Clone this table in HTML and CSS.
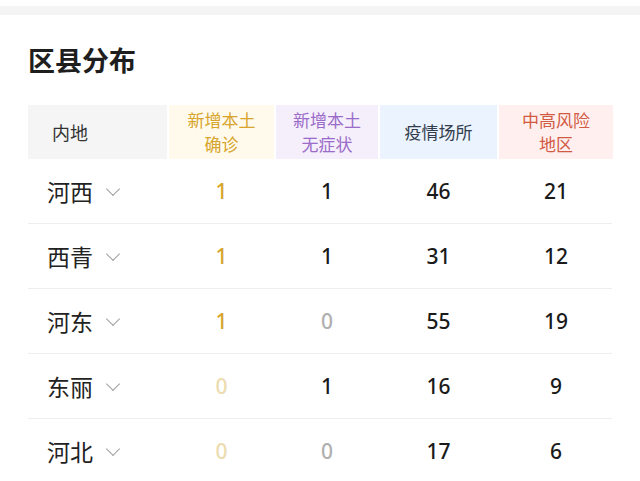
FILE: index.html
```html
<!DOCTYPE html>
<html lang="zh-CN">
<head>
  <meta charset="UTF-8">
  <title>区县分布</title>
  <link rel="stylesheet" href="styles.css">
</head>
<body>
  <div class="top-bar"></div>

  <div class="section">
    <h2 class="section-title">区县分布</h2>

    <div class="table">
      <!-- 表头 -->
      <div class="row head">
        <div class="cell name-head">内地</div>
        <div class="cell h-confirm">新增本土<br>确诊</div>
        <div class="cell h-silent">新增本土<br>无症状</div>
        <div class="cell h-place">疫情场所</div>
        <div class="cell h-risk">中高风险<br>地区</div>
      </div>

      <div class="row">
        <div class="cell name">河西<span class="arrow"></span></div>
        <div class="cell num yellow">1</div>
        <div class="cell num">1</div>
        <div class="cell num">46</div>
        <div class="cell num">21</div>
      </div>
      <div class="row">
        <div class="cell name">西青<span class="arrow"></span></div>
        <div class="cell num yellow">1</div>
        <div class="cell num">1</div>
        <div class="cell num">31</div>
        <div class="cell num">12</div>
      </div>
      <div class="row">
        <div class="cell name">河东<span class="arrow"></span></div>
        <div class="cell num yellow">1</div>
        <div class="cell num zero">0</div>
        <div class="cell num">55</div>
        <div class="cell num">19</div>
      </div>
      <div class="row">
        <div class="cell name">东丽<span class="arrow"></span></div>
        <div class="cell num yellow-zero">0</div>
        <div class="cell num">1</div>
        <div class="cell num">16</div>
        <div class="cell num">9</div>
      </div>
      <div class="row">
        <div class="cell name">河北<span class="arrow"></span></div>
        <div class="cell num yellow-zero">0</div>
        <div class="cell num zero">0</div>
        <div class="cell num">17</div>
        <div class="cell num">6</div>
      </div>
    </div>
  </div>
</body>
</html>
```

FILE: styles.css
```css
/* 全局样式 */
body, html {
  margin: 0;
  background: #fff;
  font-family: "Noto Sans CJK SC", "Noto Sans", sans-serif;
  color: #222;
  overflow: hidden;
}

.top-bar {
  margin-top: 6px;
  height: 9px;
  background: #f4f4f4;
}

.section {
  padding: 0 28px;
}

.section-title {
  margin: 0;
  padding-top: 27px;
  height: 90px;
  box-sizing: border-box;
  font-size: 27px;
  line-height: 36px;
  font-weight: bold;
  color: #1e1e1e;
}

/* 表格 */
.row {
  display: grid;
  grid-template-columns: 139px 105px 102px 117px 114px;
  column-gap: 2px;
  height: 64px;
  border-bottom: 1px solid #eeeeee;
}

.row.head {
  height: 54px;
  border-bottom: none;
}

.cell {
  display: flex;
  align-items: center;
  justify-content: center;
  text-align: center;
}

.head .cell {
  font-size: 17px;
  line-height: 24px;
}

.name-head {
  justify-content: flex-start;
  padding-left: 24px;
  background: #f5f5f5;
  color: #333;
  font-size: 18px !important;
}

.h-confirm {
  background: #fffaeb;
  color: #d7a42c;
}

.h-silent {
  background: #f5effc;
  color: #9a6bc8;
}

.h-place {
  background: #eaf3fe;
  color: #323c4c;
}

.h-risk {
  background: #fff0ef;
  color: #d25a43;
}

.name {
  justify-content: flex-start;
  padding-left: 19px;
  font-size: 23px;
  color: #222;
}

.arrow {
  width: 9px;
  height: 9px;
  margin-left: 15px;
  margin-top: -5px;
  border-right: 1.5px solid #a0a0a0;
  border-bottom: 1.5px solid #a0a0a0;
  transform: rotate(45deg);
}

.num {
  font-family: "Noto Sans", sans-serif;
  font-size: 21px;
  font-weight: 500;
  color: #1a1a1a;
}

.yellow {
  color: #d6a52c;
}

.yellow-zero {
  color: #ecdcb0;
}

.zero {
  color: #b0b0b0;
}
```
